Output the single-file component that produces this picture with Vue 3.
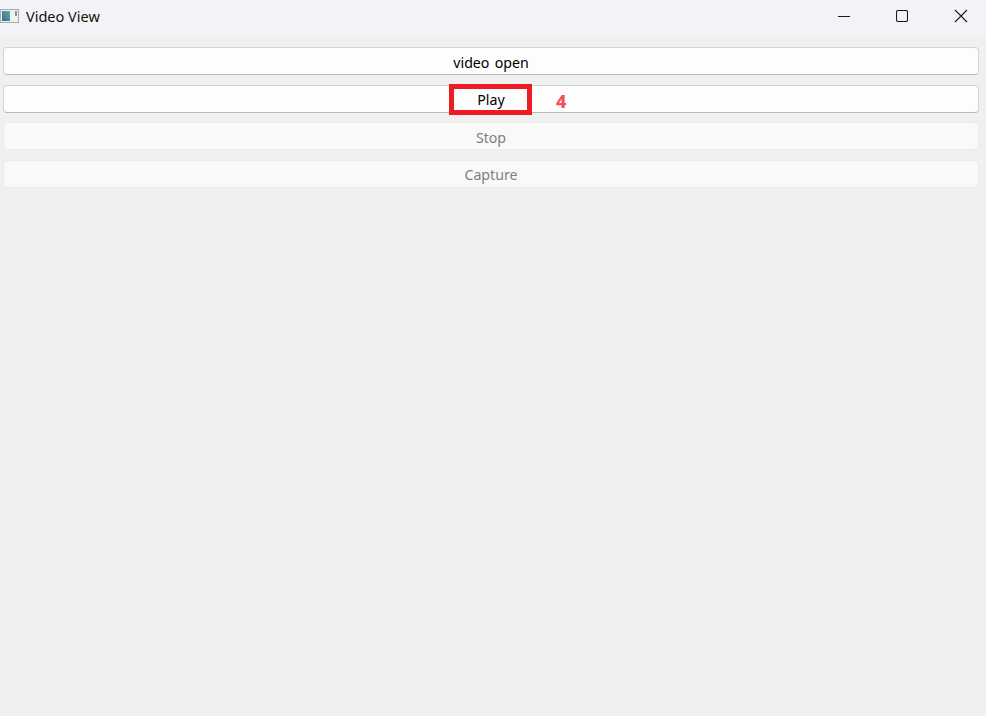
<script setup>
const buttons = [
  { label: 'video open', disabled: false },
  { label: 'Play', disabled: false, marked: true },
  { label: 'Stop', disabled: true },
  { label: 'Capture', disabled: true }
]
</script>

<template>
  <div class="window">
    <header class="titlebar">
      <svg class="app-icon" width="20" height="16" viewBox="0 0 20 16">
        <rect x="0.5" y="1.5" width="18" height="13" fill="#eef1f1" stroke="#a3adad" />
        <defs>
          <linearGradient id="pic" x1="0" y1="1" x2="1" y2="0">
            <stop offset="0" stop-color="#2f6d96" />
            <stop offset="1" stop-color="#6fa79c" />
          </linearGradient>
        </defs>
        <rect x="2" y="3" width="8" height="10" fill="url(#pic)" />
        <rect x="15" y="3" width="2" height="5" fill="#6aa3a0" />
      </svg>
      <span class="title">Video View</span>
      <div class="controls">
        <span class="control">
          <svg width="12" height="12" viewBox="0 0 12 12"><path d="M0 6.5h12" stroke="#1a1a1a" fill="none" /></svg>
        </span>
        <span class="control">
          <svg width="12" height="12" viewBox="0 0 12 12"><rect x="0.5" y="0.5" width="11" height="11" rx="1.5" stroke="#1a1a1a" stroke-width="1.1" fill="none" /></svg>
        </span>
        <span class="control">
          <svg width="14" height="14" viewBox="0 0 14 14"><path d="M1 1l12 12M13 1L1 13" stroke="#1a1a1a" stroke-width="1.1" fill="none" /></svg>
        </span>
      </div>
    </header>
    <main class="content">
      <div v-for="b in buttons" :key="b.label" class="row">
        <button class="btn" :disabled="b.disabled">{{ b.label }}</button>
        <template v-if="b.marked">
          <span class="highlight"></span>
          <span class="step">4</span>
        </template>
      </div>
    </main>
  </div>
</template>

<style>
html, body { margin: 0; background: #f0f0f0; }
</style>

<style scoped>
.window {
  width: 986px;
  height: 716px;
  background: #f0f0f0;
  font-family: "Noto Sans", "Open Sans", sans-serif;
  overflow: hidden;
}
.titlebar {
  height: 35px;
  background: #f3f3f7;
  display: flex;
  align-items: center;
  padding-bottom: 3px;
  box-sizing: border-box;
}
.app-icon { flex: none; }
.title {
  margin-left: 6px;
  font-size: 14.5px;
  color: #111;
}
.controls {
  margin-left: auto;
  display: flex;
  margin-right: -4.25px;
}
.control {
  width: 58.5px;
  height: 32px;
  display: flex;
  align-items: center;
  justify-content: center;
}
.control:nth-child(2) { padding-right: 1px; box-sizing: border-box; }
.content {
  padding: 12px 7px 0 3px;
  display: flex;
  flex-direction: column;
  gap: 9.67px;
}
.row { position: relative; height: 28px; }
.btn {
  display: block;
  width: 100%;
  height: 100%;
  margin: 0;
  padding: 2px 0 0;
  box-sizing: border-box;
  background: #fdfdfd;
  border: 1px solid #d4d4d4;
  border-bottom-color: #b8b8b8;
  border-radius: 4px;
  font: inherit;
  font-size: 14.2px;
  word-spacing: 1.5px;
  color: #000;
}
.btn:disabled {
  background: #f9f9f9;
  border-color: #ebebeb;
  color: #7f7f7f;
}
.highlight {
  position: absolute;
  left: 446px;
  top: -1px;
  width: 83px;
  height: 31px;
  box-sizing: border-box;
  border: 5px solid #ed1c24;
}
.step {
  position: absolute;
  left: 553px;
  top: 4px;
  font-size: 18px;
  font-weight: 800;
  line-height: 24px;
  color: #f4505a;
}
</style>
